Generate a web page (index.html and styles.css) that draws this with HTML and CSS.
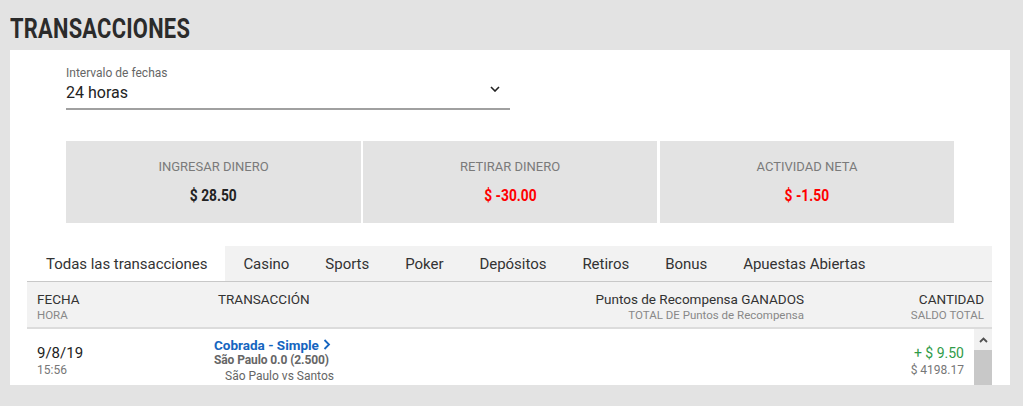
FILE: index.html
```html
<!DOCTYPE html>
<html lang="es">
<head>
    <meta charset="UTF-8">
    <meta name="viewport" content="width=device-width, initial-scale=1.0">
    <title>Transacciones</title>
    <link rel="stylesheet" href="styles.css">
</head>
<body>
    <h1 class="page-title"><span>TRANSACCIONES</span></h1>

    <div class="panel">
        <div class="date-select">
            <label class="date-label">Intervalo de fechas</label>
            <div class="date-value">
                <span>24 horas</span>
                <svg class="chevron" width="10" height="6" viewBox="0 0 10 6"><path d="M1 1l4 4 4-4" fill="none" stroke="#222" stroke-width="1.6"/></svg>
            </div>
        </div>

        <div class="summary">
            <div class="card">
                <div class="card-label">INGRESAR DINERO</div>
                <div class="card-value"><span>$ 28.50</span></div>
            </div>
            <div class="card">
                <div class="card-label">RETIRAR DINERO</div>
                <div class="card-value negative"><span>$ -30.00</span></div>
            </div>
            <div class="card">
                <div class="card-label">ACTIVIDAD NETA</div>
                <div class="card-value negative"><span>$ -1.50</span></div>
            </div>
        </div>

        <div class="transactions">
            <div class="tabs">
                <div class="tab active">Todas las transacciones</div>
                <div class="tab">Casino</div>
                <div class="tab">Sports</div>
                <div class="tab">Poker</div>
                <div class="tab">Depósitos</div>
                <div class="tab">Retiros</div>
                <div class="tab">Bonus</div>
                <div class="tab">Apuestas Abiertas</div>
            </div>

            <div class="table-head">
                <div class="col-date">
                    <div class="head-main">FECHA</div>
                    <div class="head-sub">HORA</div>
                </div>
                <div class="col-trans">
                    <div class="head-main">TRANSACCIÓN</div>
                </div>
                <div class="col-points">
                    <div class="head-main">Puntos de Recompensa GANADOS</div>
                    <div class="head-sub">TOTAL DE Puntos de Recompensa</div>
                </div>
                <div class="col-amount">
                    <div class="head-main">CANTIDAD</div>
                    <div class="head-sub">SALDO TOTAL</div>
                </div>
            </div>

            <div class="table-body">
                <div class="rows">
                    <div class="row">
                        <div class="col-date">
                            <div class="row-date">9/8/19</div>
                            <div class="row-time">15:56</div>
                        </div>
                        <div class="col-trans">
                            <div class="trans-title">Cobrada - Simple
                                <svg width="8" height="11" viewBox="0 0 8 11"><path d="M1.5 1l4.5 4.5-4.5 4.5" fill="none" stroke="#1565c0" stroke-width="1.8"/></svg>
                            </div>
                            <div class="trans-pick">São Paulo 0.0 (2.500)</div>
                            <div class="trans-event">São Paulo vs Santos</div>
                        </div>
                        <div class="col-points"></div>
                        <div class="col-amount">
                            <div class="amount-plus">+ $ 9.50</div>
                            <div class="amount-total">$ 4198.17</div>
                        </div>
                    </div>
                </div>
                <div class="scrollbar">
                    <div class="scroll-up">
                        <svg width="9" height="6" viewBox="0 0 9 6"><path d="M1 5l3.5-3.5 3.5 3.5" fill="none" stroke="#505050" stroke-width="1.8"/></svg>
                    </div>
                    <div class="scroll-thumb"></div>
                </div>
            </div>
        </div>
    </div>
</body>
</html>
```

FILE: styles.css
```css
body {
    margin: 0;
    padding: 0;
    height: 406px;
    overflow: hidden;
    background-color: #e3e3e3;
    font-family: Roboto, Arial, sans-serif;
    color: #333;
}
.page-title {
    margin: 0;
    height: 50px;
    padding-left: 10px;
    box-sizing: border-box;
    padding-top: 13px;
    font-size: 27px;
    line-height: 32px;
    font-weight: 700;
    color: #2b2b2b;
}
.page-title span {
    display: inline-block;
    transform: scaleX(0.81);
    transform-origin: left center;
    letter-spacing: 0.3px;
}
.panel {
    margin-left: 10px;
    width: 1000px;
    height: 335px;
    overflow: hidden;
    background-color: #fff;
    padding-top: 16px;
    box-sizing: border-box;
}
.date-select {
    margin-left: 56px;
    width: 444px;
    border-bottom: 2px solid #a0a0a0;
    padding-bottom: 3px;
}
.date-label {
    display: block;
    font-size: 12px;
    line-height: 15px;
    color: #666;
}
.date-value {
    display: flex;
    justify-content: space-between;
    align-items: center;
    font-size: 16px;
    line-height: 24px;
    color: #222;
}
.chevron {
    margin-right: 10px;
    margin-bottom: 8px;
}
.summary {
    display: flex;
    gap: 2px;
    margin: 31px 0 0 56px;
}
.card {
    width: 295px;
    height: 82px;
    background-color: #e3e3e3;
    text-align: center;
    box-sizing: border-box;
    padding-top: 17px;
}
.card + .card {
    width: 294px;
}
.card:last-child {
    margin-left: 1px;
}
.card-label {
    font-size: 13px;
    line-height: 18px;
    color: #7a7a7a;
}
.card-value {
    margin-top: 10px;
    font-size: 16px;
    line-height: 20px;
    font-weight: 700;
    color: #222;
}
.card-value span {
    display: inline-block;
    transform: scaleX(0.86);
}
.card-value.negative {
    color: #ff0000;
}
.transactions {
    margin: 23px 0 0 17px;
    width: 965px;
}
.tabs {
    display: flex;
    background-color: #f2f2f2;
    border-bottom: 1px solid #c8c8c8;
    height: 35px;
}
.tab {
    padding: 0 18px;
    font-size: 15px;
    line-height: 36px;
    color: #333;
    letter-spacing: -0.03px;
}
.tab.active {
    background-color: #fff;
    padding: 0 18px 0 19px;
}
.table-head {
    display: flex;
    height: 47px;
    box-sizing: border-box;
    padding-top: 9px;
    background-color: #f2f2f2;
    border-bottom: 2px solid #dcdcdc;
}
.col-date {
    width: 181px;
    padding-left: 10px;
}
.col-trans {
    width: 291px;
}
.col-points {
    width: 295px;
    text-align: right;
}
.col-amount {
    flex: 1;
    text-align: right;
    padding-right: 8px;
}
.head-main {
    font-size: 13.5px;
    line-height: 16px;
    color: #333;
}
.head-sub {
    font-size: 11.5px;
    line-height: 16px;
    color: #888;
}
.table-body {
    display: flex;
    height: 56px;
}
.rows {
    flex: 1;
}
.row {
    display: flex;
    padding-top: 8px;
}
.row .col-date {
    padding-top: 8px;
}
.row .col-trans {
    width: 296px;
    margin-left: -4px;
}
.row .col-points {
    width: 290px;
}
.row .col-amount {
    padding-right: 10px;
    padding-top: 8px;
}
.row-date {
    font-size: 15px;
    line-height: 17px;
    color: #222;
}
.row-time {
    font-size: 12px;
    line-height: 16px;
    color: #777;
}
.trans-title {
    font-size: 13.5px;
    line-height: 16px;
    font-weight: 700;
    color: #1565c0;
}
.trans-title svg {
    margin-left: 1px;
}
.trans-pick {
    font-size: 12px;
    line-height: 15px;
    font-weight: 700;
    color: #666;
    letter-spacing: -0.1px;
}
.trans-event {
    padding-left: 11px;
    font-size: 12px;
    line-height: 17px;
    color: #666;
}
.amount-plus {
    font-size: 14px;
    line-height: 17px;
    color: #2f9b48;
}
.amount-total {
    font-size: 12px;
    line-height: 16px;
    color: #777;
}
.scrollbar {
    width: 18px;
    background-color: #f1f1f1;
    display: flex;
    flex-direction: column;
}
.scroll-up {
    height: 21px;
    display: flex;
    align-items: center;
    justify-content: center;
}
.scroll-thumb {
    flex: 1;
    background-color: #c8c8c8;
}
```
